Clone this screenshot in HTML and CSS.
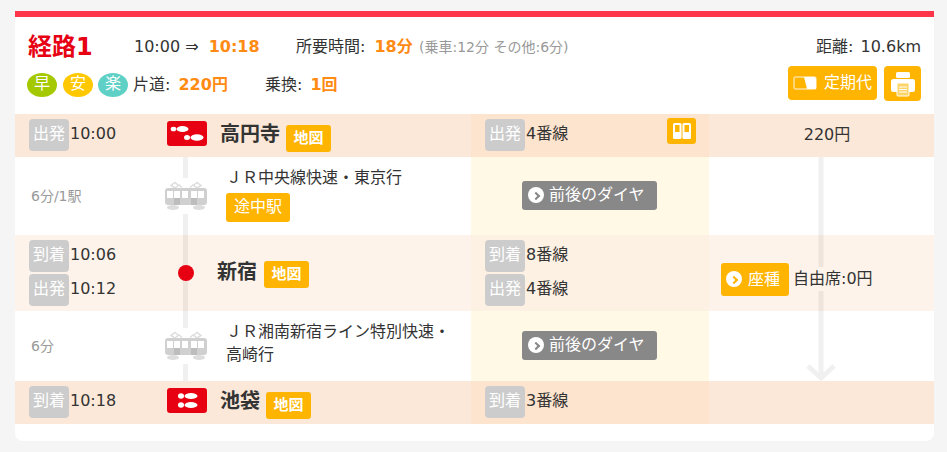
FILE: index.html
```html
<!DOCTYPE html>
<html lang="ja">
<head>
  <meta charset="UTF-8">
  <title>経路1</title>
  <link rel="stylesheet" href="styles.css">
</head>
<body>
  <div class="card">
    <div class="summary">
      <div class="summary-left">
        <div class="summary-row">
          <h2 class="route-title">経路1</h2>
          <span class="times">10:00 ⇒ <b>10:18</b></span>
          <span class="duration">所要時間: <b>18分</b></span>
          <span class="breakdown">(乗車:12分 その他:6分)</span>
        </div>
        <div class="summary-row second">
          <span class="tag early">早</span>
          <span class="tag safe">安</span>
          <span class="tag easy">楽</span>
          <span class="fare">片道: <b>220円</b></span>
          <span class="transfer">乗換: <b>1回</b></span>
        </div>
      </div>
      <div class="summary-right">
        <div class="distance">距離: 10.6km</div>
        <div class="actions">
          <a class="btn pass-btn">
            <svg width="24" height="14" viewBox="0 0 24 14"><rect x="1" y="1" width="22" height="12" rx="2" fill="none" stroke="#ffe09a" stroke-width="1.500"/><path d="M11 1h10a2 2 0 0 1 2 2v10h-9z" fill="#fff"/></svg>
            定期代
          </a>
          <a class="btn print-btn">
            <svg width="26" height="26" viewBox="0 0 26 26"><rect x="6" y="1" width="14" height="6" rx="1.500" fill="#fff"/><rect x="1" y="8" width="24" height="13" rx="2.500" fill="#fff"/><rect x="7" y="12" width="12" height="13" rx="1" fill="#ffd466" stroke="#fff" stroke-width="1"/><path d="M9 16h8M9 18.500h8M9 21h8" stroke="#fff" stroke-width="1"/></svg>
          </a>
        </div>
      </div>
    </div>

    <div class="rows">
      <div class="route-line"></div>
      <svg class="flow-arrow" width="32" height="224" viewBox="0 0 32 224"><path d="M16 0V221M3 209l13 12 13-12" fill="none" stroke="#000" stroke-opacity=".06" stroke-width="5"/></svg>

      <div class="row station edge">
        <div class="main">
          <div class="time-cell"><div class="stamp"><i>出発</i>10:00</div></div>
          <div class="icon-cell">
            <svg class="walk" width="40" height="25" viewBox="0 0 40 25"><rect width="40" height="25" rx="3" fill="#e60012"/><ellipse cx="6.500" cy="8" rx="2.800" ry="2.300" fill="#fff"/><ellipse cx="15.500" cy="8" rx="6" ry="3" fill="#fff"/><ellipse cx="20" cy="16.500" rx="3" ry="2.500" fill="#fff"/><ellipse cx="30" cy="16.500" rx="6.500" ry="3.200" fill="#fff"/></svg>
          </div>
          <div class="name-cell"><span class="name">高円寺</span><a class="map-btn">地図</a></div>
        </div>
        <div class="platform">
          <div class="stamp"><i>出発</i>4番線</div>
          <a class="door-btn">
            <svg width="18" height="16" viewBox="0 0 18 16"><rect width="8.500" height="16" rx="1.500" fill="#fff"/><rect x="9.500" width="8.500" height="16" rx="1.500" fill="#fff"/><rect x="2" y="2" width="4.500" height="7" fill="#ffb400"/><rect x="11.500" y="2" width="4.500" height="7" fill="#ffb400"/></svg>
          </a>
        </div>
        <div class="fare-cell">220円</div>
      </div>

      <div class="row ride first-ride">
        <div class="main">
          <div class="time-cell"><span class="ride-time">6分/1駅</span></div>
          <div class="icon-cell">
            <svg class="train" width="42" height="36" viewBox="0 0 42 36"><use href="#train-shape"/></svg>
          </div>
          <div class="name-cell ride-info">
            <div class="line-name">ＪＲ中央線快速・東京行</div>
            <a class="stops-btn">途中駅</a>
          </div>
        </div>
        <div class="platform center"><a class="dia-btn"><span class="go-icon"></span>前後のダイヤ</a></div>
        <div class="fare-cell"></div>
      </div>

      <div class="row station middle">
        <div class="main">
          <div class="time-cell">
            <div class="stamp"><i>到着</i>10:06</div>
            <div class="stamp"><i>出発</i>10:12</div>
          </div>
          <div class="icon-cell"><span class="dot"></span></div>
          <div class="name-cell via"><span class="name">新宿</span><a class="map-btn">地図</a></div>
        </div>
        <div class="platform stack">
          <div class="stamp"><i>到着</i>8番線</div>
          <div class="stamp"><i>出発</i>4番線</div>
        </div>
        <div class="fare-cell seat-cell">
          <a class="seat-btn"><span class="go-icon orange"></span>座種</a>
          <span class="seat-text">自由席:0円</span>
        </div>
      </div>

      <div class="row ride second-ride">
        <div class="main">
          <div class="time-cell"><span class="ride-time">6分</span></div>
          <div class="icon-cell">
            <svg class="train" width="42" height="36" viewBox="0 0 42 36"><use href="#train-shape"/></svg>
          </div>
          <div class="name-cell ride-info">
            <div class="line-name">ＪＲ湘南新宿ライン特別快速・<br>高崎行</div>
          </div>
        </div>
        <div class="platform center"><a class="dia-btn"><span class="go-icon"></span>前後のダイヤ</a></div>
        <div class="fare-cell"></div>
      </div>

      <div class="row station edge">
        <div class="main">
          <div class="time-cell"><div class="stamp"><i>到着</i>10:18</div></div>
          <div class="icon-cell">
            <svg class="walk" width="40" height="25" viewBox="0 0 40 25"><rect width="40" height="25" rx="3" fill="#e60012"/><ellipse cx="14" cy="8" rx="3" ry="2.800" fill="#fff"/><ellipse cx="24" cy="8" rx="6.500" ry="3" fill="#fff"/><ellipse cx="14" cy="17" rx="3" ry="2.800" fill="#fff"/><ellipse cx="24" cy="17" rx="6.500" ry="3" fill="#fff"/></svg>
          </div>
          <div class="name-cell"><span class="name">池袋</span><a class="map-btn">地図</a></div>
        </div>
        <div class="platform"><div class="stamp"><i>到着</i>3番線</div></div>
        <div class="fare-cell"></div>
      </div>
    </div>
  </div>

  <svg class="defs" width="0" height="0">
    <defs>
      <g id="train-shape">
        <path d="M10 10l4-3 3 2.500M32 10l-4-3-3 2.500M10 10l-4-2.500 4-3 3 2.500M32 10l4-2.500-4-3-3 2.500" fill="none" stroke="#ddd" stroke-width="1.500"/>
        <rect x="0" y="10" width="42" height="17" rx="3" fill="#d0d0d0"/>
        <rect x="9" y="13" width="6" height="14" fill="#bdbdbd"/>
        <rect x="26" y="13" width="6" height="14" fill="#bdbdbd"/>
        <rect x="2" y="13" width="6" height="7" fill="#fff"/>
        <rect x="9" y="13" width="6" height="7" fill="#fff"/>
        <rect x="17" y="13" width="6" height="7" fill="#fff"/>
        <rect x="26" y="13" width="6" height="7" fill="#fff"/>
        <rect x="33" y="13" width="6" height="7" fill="#fff"/>
        <ellipse cx="8" cy="29.500" rx="6" ry="2.500" fill="#ddd"/>
        <ellipse cx="34" cy="29.500" rx="6" ry="2.500" fill="#ddd"/>
      </g>
    </defs>
  </svg>
</body>
</html>
```

FILE: styles.css
```css
:root {
  --orange: #ff8a14;
  --amber: #ffb400;
  --red: #e60012;
  --text: #333;
  --grey: #999;
}

* {
  box-sizing: border-box;
}

body {
  margin: 0;
  padding: 11px 13px 0 15px;
  background: #f5f5f5;
  color: var(--text);
  font-family: "DejaVu Sans", "Noto Sans CJK JP", sans-serif;
  font-size: 16px;
  line-height: 24px;
}

.defs {
  position: absolute;
}

.card {
  width: 919px;
  height: 430px;
  background: #fff;
  border-top: 6px solid #ff364a;
  border-radius: 0 0 8px 8px;
}

/* summary */
.summary {
  display: flex;
  justify-content: space-between;
  height: 97px;
}

.summary-left {
  padding: 18px 0 0 13px;
}

.summary-row {
  display: flex;
  align-items: center;
  height: 24px;
}

.summary-row b {
  margin-left: 3px;
  color: var(--orange);
}

.summary-row.second {
  margin: 14px 0 0 -1px;
}

.route-title {
  width: 106px;
  margin: 0;
  color: var(--red);
  font-size: 24px;
  font-weight: bold;
}

.times {
  width: 162px;
}

.times b {
  margin-left: 5px;
}

.duration {
  width: 123px;
}

.duration b {
  margin-left: 4px;
}

.breakdown {
  color: var(--grey);
  font-size: 14px;
}

.tag {
  width: 30px;
  height: 24px;
  margin-right: 6px;
  border-radius: 50%;
  color: #fff;
  line-height: 21px;
  text-align: center;
}

.early { background: #a4c900; }
.safe { background: #ffc800; margin-right: 5px; }
.easy { background: #5fd0c5; margin-right: 5px; }

.fare {
  width: 132px;
}

.summary-right {
  padding: 18px 13px 0 0;
  text-align: right;
}

.distance {
  word-spacing: 2px;
}

.actions {
  display: flex;
  gap: 7px;
  margin-top: 7px;
}

.btn {
  display: flex;
  align-items: center;
  justify-content: center;
  height: 34px;
  background: var(--amber);
  border-radius: 4px;
  color: #fff;
}

.pass-btn {
  gap: 7px;
  width: 89px;
}

.print-btn {
  width: 37px;
  height: 35px;
}

/* rows */
.rows {
  position: relative;
}

.route-line {
  position: absolute;
  top: 43px;
  left: 168px;
  width: 5px;
  height: 224px;
  background: rgba(0, 0, 0, .06);
}

.flow-arrow {
  position: absolute;
  top: 43px;
  left: 790px;
}

.row {
  display: grid;
  grid-template-columns: 456px 238px 225px;
}

.station.edge {
  height: 43px;
  background: #fce8d8;
}

.station.middle {
  height: 76px;
  background: #fdf3ea;
}

.ride.first-ride {
  height: 78px;
}

.ride.second-ride {
  height: 70px;
}

.main {
  display: grid;
  grid-template-columns: 150px 42px 1fr;
}

.time-cell {
  display: flex;
  flex-direction: column;
  justify-content: center;
  gap: 2px;
  padding-left: 14px;
}

.stamp {
  display: flex;
  gap: 1px;
  height: 32px;
  line-height: 29px;
}

.edge .stamp {
  margin-top: -1px;
}

.stamp i {
  width: 40px;
  height: 32px;
  background: #ccc;
  border-radius: 4px;
  color: #fff;
  font-style: normal;
  line-height: 30px;
  text-align: center;
}

.ride-time {
  margin-left: 2px;
  color: var(--grey);
  font-size: 14px;
}

.icon-cell {
  position: relative;
  z-index: 1;
  display: flex;
  align-items: center;
  justify-content: center;
}

.train {
  background: #fff;
}

.walk {
  margin: -4px 0 0 2px;
}

.dot {
  width: 16px;
  height: 16px;
  border-radius: 50%;
  background: var(--red);
}

.name-cell {
  display: flex;
  align-items: center;
  gap: 6px;
  padding-left: 13px;
}

.name-cell.via {
  gap: 7px;
  padding-left: 10px;
}

.name {
  margin-top: -3px;
  font-size: 20px;
  font-weight: bold;
}

.map-btn {
  width: 45px;
  height: 27px;
  margin-top: 5px;
  background: var(--amber);
  border-radius: 3px;
  color: #fff;
  font-size: 15px;
  font-weight: bold;
  line-height: 26px;
  text-align: center;
}

.name-cell.via .map-btn {
  margin-top: 2px;
}

.ride-info {
  display: block;
  padding: 9px 0 0 19px;
}

.line-name {
  line-height: 23px;
}

.stops-btn {
  display: block;
  width: 64px;
  height: 29px;
  margin-top: 4px;
  background: var(--amber);
  border-radius: 3px;
  color: #fff;
  line-height: 28px;
  text-align: center;
}

.platform {
  position: relative;
  display: flex;
  align-items: center;
  padding-left: 14px;
  background: #fff9e6;
}

.edge .platform {
  background: #fde4cf;
}

.middle .platform {
  background: #fdf1e3;
}

.platform.center {
  justify-content: center;
  padding-left: 0;
}

.platform.stack {
  flex-direction: column;
  align-items: flex-start;
  justify-content: center;
  gap: 2px;
}

.door-btn {
  position: absolute;
  top: 4px;
  right: 13px;
  display: flex;
  align-items: center;
  justify-content: center;
  width: 29px;
  height: 26px;
  background: var(--amber);
  border-radius: 3px;
}

.dia-btn {
  display: flex;
  align-items: center;
  gap: 5px;
  width: 135px;
  height: 29px;
  margin: -2px 0 0 -1px;
  padding-left: 6px;
  background: #888;
  border-radius: 3px;
  color: #fff;
}

.go-icon {
  position: relative;
  flex: none;
  width: 16px;
  height: 16px;
  border-radius: 50%;
  background: #fff;
}

.go-icon::after {
  content: "";
  position: absolute;
  top: 5.500px;
  left: 4.500px;
  width: 4px;
  height: 4px;
  border-top: 2px solid #888;
  border-right: 2px solid #888;
  transform: rotate(45deg);
}

.go-icon.orange::after {
  border-color: var(--amber);
}

.fare-cell {
  padding-left: 11px;
  line-height: 41px;
  text-align: center;
}

.seat-cell {
  position: relative;
  z-index: 1;
  display: flex;
  align-items: center;
  padding: 12px 0 0 12px;
}

.seat-btn {
  display: flex;
  align-items: center;
  gap: 6px;
  width: 68px;
  height: 33px;
  padding-left: 5px;
  background: var(--amber);
  border-radius: 3px;
  color: #fff;
}

.seat-text {
  margin-left: 4px;
  line-height: 24px;
  background: #fdf3ea;
}
```
